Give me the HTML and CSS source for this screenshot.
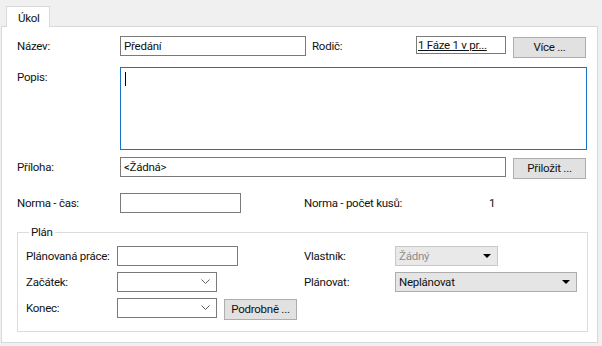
FILE: index.html
```html
<!DOCTYPE html>
<html lang="cs">
<head>
<meta charset="utf-8">
<title>Úkol</title>
<link rel="stylesheet" href="styles.css">
</head>
<body>
<div class="tabs">
  <div class="tab">Úkol</div>
</div>
<div class="page">
  <div class="row r1">
    <span class="lbl">Název:</span>
    <div class="box w186">Předání</div>
    <span class="lbl lbl-rodic">Rodič:</span>
    <div class="link">1 Fáze 1 v pr...</div>
    <div class="btn">Více ...</div>
  </div>
  <div class="row r2">
    <span class="lbl">Popis:</span>
    <div class="area"><span class="caret"></span></div>
  </div>
  <div class="row r3">
    <span class="lbl">Příloha:</span>
    <div class="box w386">&lt;Žádná&gt;</div>
    <div class="btn">Přiložit ...</div>
  </div>
  <div class="row r4">
    <span class="lbl">Norma - čas:</span>
    <div class="box w121"></div>
    <span class="lbl lbl-kusu">Norma - počet kusů:</span>
    <span class="val">1</span>
  </div>
  <fieldset class="group">
    <legend>Plán</legend>
    <div class="grow g1">
      <span class="glbl">Plánovaná práce:</span>
      <div class="box w121"></div>
      <span class="glbl2">Vlastník:</span>
      <div class="combo disabled w103"><span>Žádný</span><span class="tri"></span></div>
    </div>
    <div class="grow g2">
      <span class="glbl">Začátek:</span>
      <div class="date"><svg class="chev" width="9" height="6" viewBox="0 0 9 6"><path d="M0.5 0.5 L4.5 4.5 L8.5 0.5" fill="none" stroke="#606060" stroke-width="1"/></svg></div>
      <span class="glbl2">Plánovat:</span>
      <div class="combo w182"><span>Neplánovat</span><span class="tri"></span></div>
    </div>
    <div class="grow g3">
      <span class="glbl">Konec:</span>
      <div class="date"><svg class="chev" width="9" height="6" viewBox="0 0 9 6"><path d="M0.5 0.5 L4.5 4.5 L8.5 0.5" fill="none" stroke="#606060" stroke-width="1"/></svg></div>
      <div class="btn btn-podr">Podrobně ...</div>
    </div>
  </fieldset>
</div>
</body>
</html>
```
FILE: styles.css
```css
* { box-sizing: border-box; }
html, body { margin: 0; padding: 0; }
body {
  width: 602px;
  height: 346px;
  background: #f0f0f0;
  font-family: Roboto, "Liberation Sans", Arial, sans-serif;
  font-size: 11.5px;
  letter-spacing: -0.25px;
  line-height: 15px;
  color: #111;
  overflow: hidden;
  white-space: nowrap;
}
.tabs {
  display: flex;
  padding: 6px 0 0 6px;
  height: 27px;
}
.tab {
  width: 44px;
  height: 21px;
  background: #fff;
  border: 1px solid #d9d9d9;
  border-bottom: none;
  padding: 4px 0 0 11px;
  position: relative;
  z-index: 1;
  margin-bottom: -1px;
}
.page {
  margin: -1px 4px 0 1px;
  height: 317px;
  background: #fff;
  border: 1px solid #d9d9d9;
  padding: 9px 0 0 15px;
}
.row {
  display: flex;
  align-items: flex-start;
}
.lbl {
  width: 103px;
  flex: none;
  padding-top: 3px;
}
.r2 { margin-top: 9px; }
.r3 { margin-top: 7px; }
.r4 { margin-top: 14px; }
.box {
  height: 20px;
  border: 1px solid #7a7a7a;
  background: #fff;
  padding: 2px 0 0 3px;
  flex: none;
}
.w186 { width: 186px; }
.w386 { width: 386px; }
.w121 { width: 121px; }
.lbl-rodic { width: 104px; margin-left: 6px; }
.link {
  width: 90px;
  height: 18px;
  border: 1px solid #7a7a7a;
  padding: 1px 0 0 1px;
  text-decoration: underline;
  flex: none;
  overflow: hidden;
}
.btn {
  width: 73px;
  height: 21px;
  background: #e1e1e1;
  border: 1px solid #adadad;
  display: flex;
  align-items: center;
  justify-content: center;
  margin-left: 7px;
  margin-top: 1px;
  flex: none;
  padding-bottom: 1px;
}
.area {
  width: 467px;
  height: 83px;
  border: 1px solid #1a73c2;
  background: #fff;
  padding: 4px 0 0 4px;
}
.caret {
  display: block;
  width: 1px;
  height: 14px;
  background: #000;
}
.lbl-kusu { width: 185px; margin-left: 63px; }
.val { padding-top: 3px; }
.group {
  margin: 12px 0 0 0;
  width: 571px;
  height: 107px;
  border: 1px solid #dcdcdc;
  padding: 7px 0 0 8px;
  min-width: 0;
}
.group legend {
  padding: 0 2px;
  margin-left: 3px;
  line-height: 14px;
}
.grow {
  display: flex;
  align-items: flex-start;
}
.g2, .g3 { margin-top: 6px; }
.glbl {
  width: 91px;
  flex: none;
  padding-top: 3px;
}
.glbl2 {
  width: 91px;
  flex: none;
  padding-top: 3px;
  margin-left: 66px;
}
.g2 .glbl2 { margin-left: 87px; }
.date {
  width: 100px;
  height: 20px;
  border: 1px solid #7a7a7a;
  background: #fff;
  flex: none;
  display: flex;
  justify-content: flex-end;
  align-items: center;
  padding-right: 6px;
}
.combo {
  height: 20px;
  border: 1px solid #adadad;
  background: #e5e5e5;
  display: flex;
  align-items: center;
  justify-content: space-between;
  padding: 0 6px 0 3px;
  flex: none;
}
.combo.disabled {
  background: #e9e9e9;
  border-color: #c8c8c8;
  color: #8d8d8d;
}
.w103 { width: 103px; }
.w182 { width: 182px; }
.tri {
  width: 0;
  height: 0;
  border-left: 4px solid transparent;
  border-right: 4px solid transparent;
  border-top: 4px solid #000;
}
.btn-podr { margin-left: 7px; }
```
